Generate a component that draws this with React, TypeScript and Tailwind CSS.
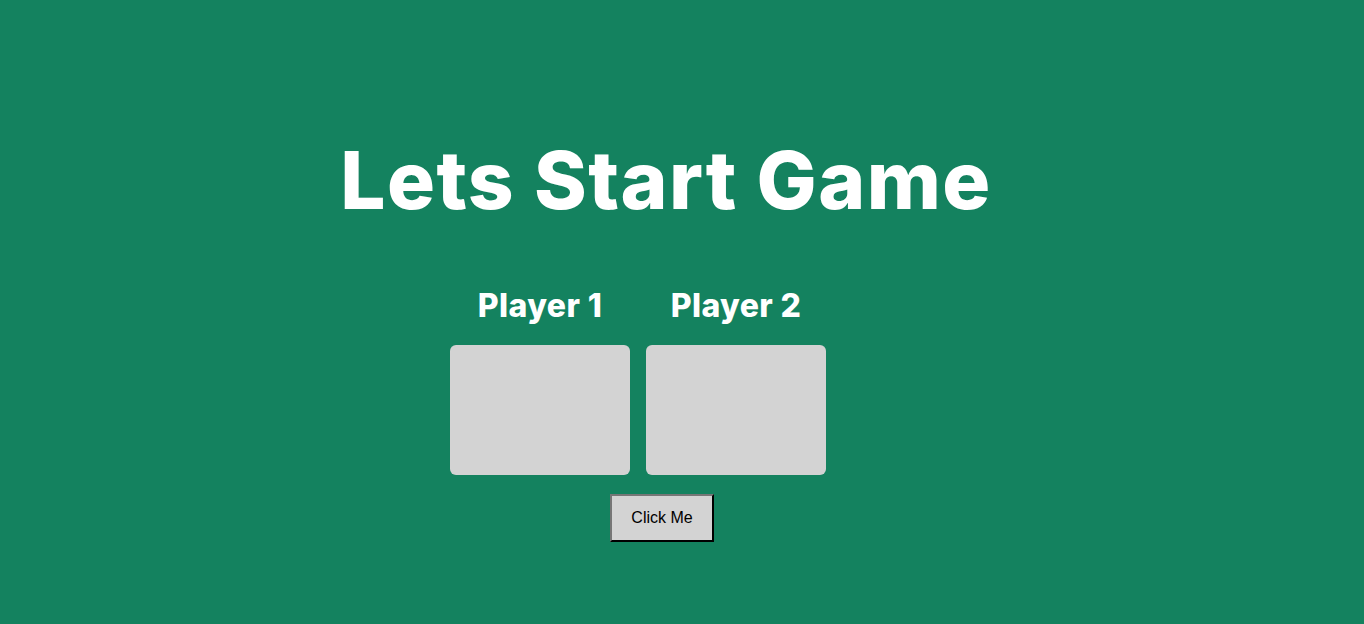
import React from 'react';

const App = () => {
  return (
    <div className="w-full h-[624px] bg-[#14825f] flex flex-col items-center font-['Inter',sans-serif]">
      {/* Heading */}
      <div className="w-full flex justify-center pr-[32px] mt-[128px]">
        <h1 className="text-[80px] leading-[104px] font-extrabold text-white tracking-[1.4px]">
          Lets Start Game
        </h1>
      </div>

      {/* Players */}
      <div className="w-full flex justify-center pr-[88px] mt-[52px] gap-x-4">
        {['Player 1', 'Player 2'].map((name) => (
          <div key={name} className="flex flex-col items-center">
            <h2 className="text-[32px] leading-[44px] font-extrabold text-white tracking-[0.4px]">{name}</h2>
            <div className="mt-[17px] w-[180px] h-[130px] bg-[#d3d3d3] rounded-md"></div>
          </div>
        ))}
      </div>

      {/* Button */}
      <div className="w-full flex justify-center pr-[40px] mt-[19px]">
        <button className="w-[104px] h-[48px] bg-[#d3d3d3] border-2 border-t-[#767676] border-l-[#767676] border-r-black border-b-black text-[16px] text-black font-['Liberation_Sans',Arial,sans-serif]">
          Click Me
        </button>
      </div>
    </div>
  );
};

export default App;
